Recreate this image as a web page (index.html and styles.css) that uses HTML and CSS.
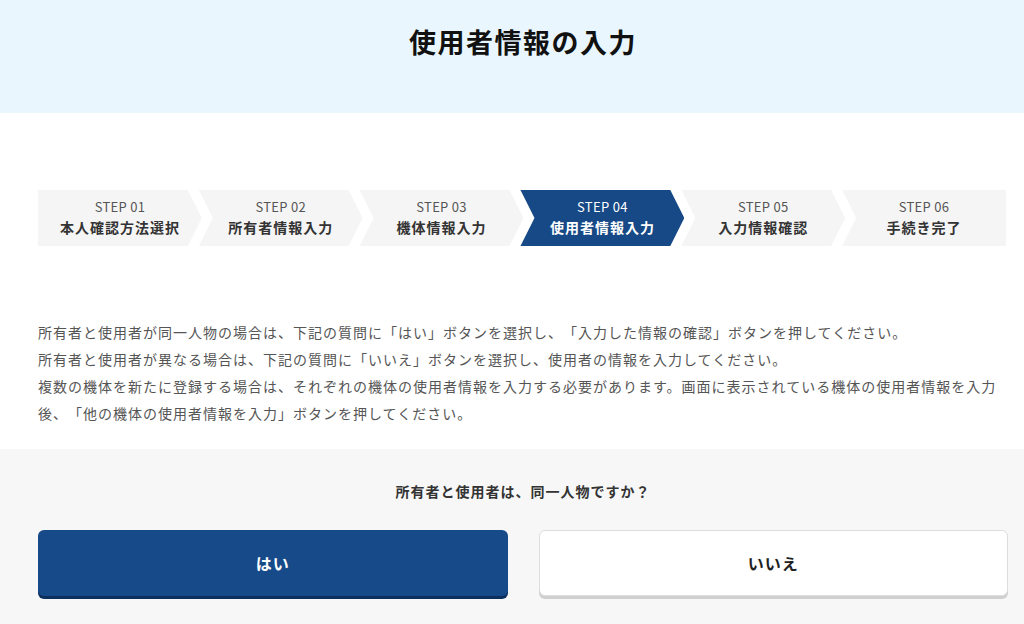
FILE: index.html
```html
<!DOCTYPE html>
<html lang="ja">
<head>
    <meta charset="utf-8">
    <title>使用者情報の入力</title>
    <link rel="stylesheet" href="styles.css">
</head>
<body>
    <header class="page-header">
        <div class="container">
            <h1>使用者情報の入力</h1>
        </div>
    </header>

    <div class="container">
        <!-- Step indicator -->
        <ol class="steps">
            <li class="step step-first">
                <span class="step-num">STEP 01</span>
                <span class="step-label">本人確認方法選択</span>
            </li>
            <li class="step">
                <span class="step-num">STEP 02</span>
                <span class="step-label">所有者情報入力</span>
            </li>
            <li class="step">
                <span class="step-num">STEP 03</span>
                <span class="step-label">機体情報入力</span>
            </li>
            <li class="step step-current">
                <span class="step-num">STEP 04</span>
                <span class="step-label">使用者情報入力</span>
            </li>
            <li class="step">
                <span class="step-num">STEP 05</span>
                <span class="step-label">入力情報確認</span>
            </li>
            <li class="step step-last">
                <span class="step-num">STEP 06</span>
                <span class="step-label">手続き完了</span>
            </li>
        </ol>

        <p class="lead">
            所有者と使用者が同一人物の場合は、下記の質問に「はい」ボタンを選択し、「入力した情報の確認」ボタンを押してください。<br>
            所有者と使用者が異なる場合は、下記の質問に「いいえ」ボタンを選択し、使用者の情報を入力してください。<br>
            複数の機体を新たに登録する場合は、それぞれの機体の使用者情報を入力する必要があります。画面に表示されている機体の使用者情報を入力後、「他の機体の使用者情報を入力」ボタンを押してください。
        </p>
    </div>

    <section class="question">
        <div class="container">
            <p class="question-text">所有者と使用者は、同一人物ですか？</p>
            <div class="answers">
                <button class="btn btn-yes">はい</button>
                <button class="btn btn-no">いいえ</button>
            </div>
        </div>
    </section>
</body>
</html>
```

FILE: styles.css
```css
body {
    margin: 0;
    font-family: "Noto Sans CJK JP", "Noto Sans", sans-serif;
    color: #333;
    background: #fff;
    text-spacing-trim: space-all;
}

/* Page title band */
.page-header {
    background-color: #e9f6fe;
    height: 113px;
    padding-top: 22px;
    box-sizing: border-box;
}

.page-header h1 {
    margin: 0;
    text-align: center;
    font-size: 27px;
    font-weight: bold;
    letter-spacing: 1.5px;
    line-height: 40px;
    color: #111;
}

.container {
    width: 970px;
    margin-left: 38px;
}

/* Step indicator */
.steps {
    display: flex;
    width: 968px;
    list-style: none;
    margin: 77px 0 0;
    padding: 0;
}

.step {
    flex: 1;
    height: 56px;
    margin-left: -3px;
    background-color: #f5f5f5;
    color: #333;
    display: flex;
    flex-direction: column;
    align-items: center;
    justify-content: center;
    clip-path: polygon(0 0, calc(100% - 14px) 0, 100% 50%, calc(100% - 14px) 100%, 0 100%, 14px 50%);
}

.step-first {
    margin-left: 0;
    clip-path: polygon(0 0, calc(100% - 14px) 0, 100% 50%, calc(100% - 14px) 100%, 0 100%);
}

.step-last {
    clip-path: polygon(0 0, 100% 0, 100% 100%, 0 100%, 14px 50%);
}

.step-num {
    font-size: 13px;
    line-height: 18px;
    color: #555;
    letter-spacing: 0.3px;
}

.step-label {
    font-size: 14px;
    line-height: 22px;
    font-weight: bold;
    letter-spacing: 1px;
}

.step-current {
    background-color: #164986;
    color: #fff;
}

.step-current .step-num {
    color: #fff;
}

/* Lead text */
.lead {
    margin: 73px 0 0;
    padding-bottom: 22px;
    font-size: 14px;
    line-height: 27px;
    letter-spacing: 1px;
    color: #555;
}

/* Question block */
.question {
    background-color: #f7f7f7;
    padding: 31px 0 40px;
}

.question-text {
    margin: 0;
    text-align: center;
    font-size: 14px;
    line-height: 22px;
    font-weight: bold;
    letter-spacing: 1px;
    color: #333;
}

.answers {
    display: grid;
    grid-template-columns: 1fr 1fr;
    gap: 31px;
    margin-top: 28px;
}

.btn {
    height: 66px;
    border-radius: 6px;
    font-family: inherit;
    font-size: 16px;
    font-weight: bold;
    letter-spacing: 1px;
    cursor: pointer;
}

.btn-yes {
    background-color: #174a88;
    color: #fff;
    border: none;
    box-shadow: 0 3px 0 #0d2f5e;
}

.btn-no {
    background-color: #fff;
    color: #222;
    border: 1px solid #ddd;
    box-shadow: 0 3px 0 #cfcfcf;
}
```
